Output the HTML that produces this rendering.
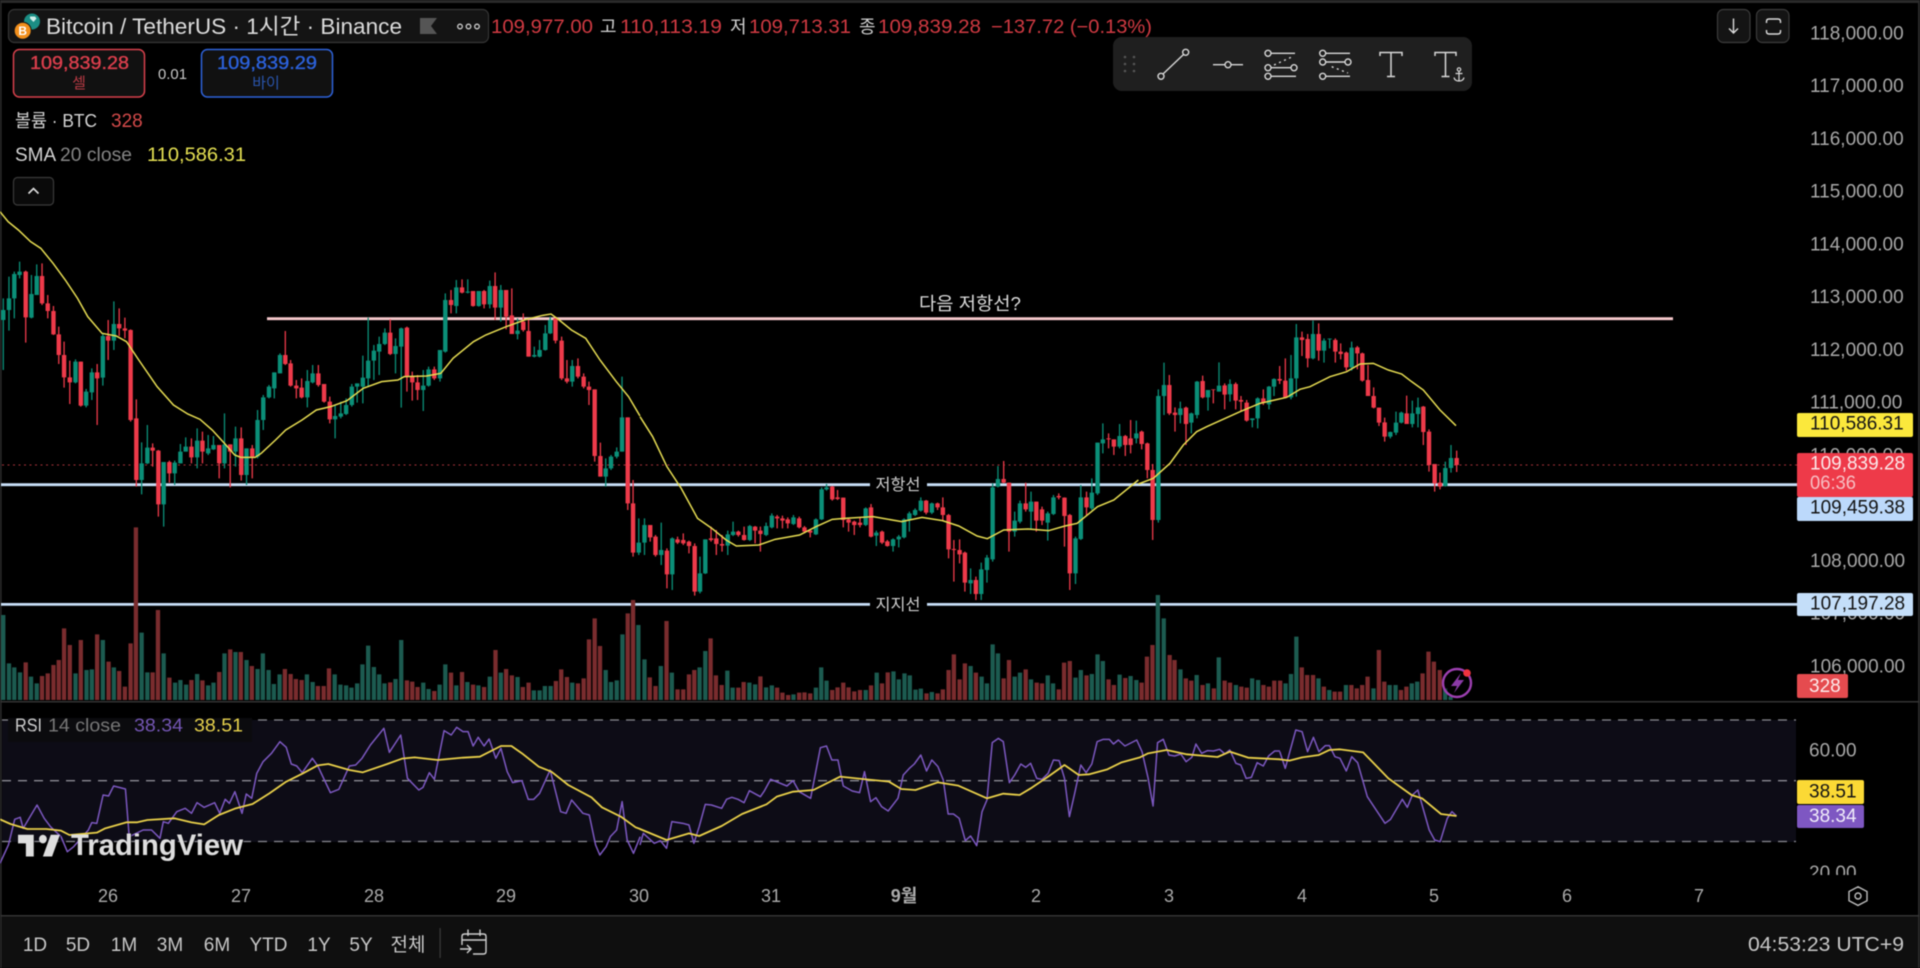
<!DOCTYPE html>
<html lang="ko"><head><meta charset="utf-8"><title>Bitcoin / TetherUS</title>
<style>
html,body{margin:0;padding:0;background:#000;overflow:hidden;width:1920px;height:968px}
svg{display:block;position:absolute;left:0;top:0;filter:blur(.45px)}
text{font-family:"Liberation Sans","Noto Sans CJK KR",sans-serif;white-space:pre}
.n path,.n polyline{vector-effect:non-scaling-stroke;fill:none}
.wg{stroke:#0b8f78;stroke-width:1.3}.wr{stroke:#ee3a4a;stroke-width:1.3}
.bg{stroke:#0b8f78;stroke-width:4.4}.br{stroke:#ee3a4a;stroke-width:4.4}
.vg{stroke:#1c5b50;stroke-width:4.3}.vr{stroke:#7a2c2e;stroke-width:4.3}
.sma{stroke:#e6dc52;stroke-width:1.5}
.rp{stroke:#7c58c0;stroke-width:1.5;stroke-linejoin:round}.ry{stroke:#e9d04a;stroke-width:1.8;stroke-linejoin:round}
.p{font-size:19px;fill:#a8a8a8}
.d{font-size:18px;fill:#aaa;text-anchor:middle}
.t{font-size:19px;fill:#c8c8c8;text-anchor:middle}
.i{fill:none;stroke:#d8d8d8;stroke-width:1.4}
</style></head><body>
<svg width="1920" height="968" viewBox="0 0 1920 968" xmlns="http://www.w3.org/2000/svg">
<rect width="1920" height="968" fill="#000"/>
<rect x="2" y="720" width="1794" height="122" fill="#0d0c16"/>
<rect y="916" width="1920" height="52" fill="#0f0f0f"/>
<rect y="0" width="1920" height="3" fill="#2a2a2a"/>
<rect x="0" y="0" width="1.6" height="968" fill="#2a2a2a"/>
<rect x="1918" y="0" width="2" height="968" fill="#2a2a2a"/>
<rect y="701" width="1920" height="1.5" fill="#333"/>
<rect y="915" width="1920" height="1.5" fill="#333"/>

<!-- horizontal drawings -->
<path d="M2 465H1797" stroke="#a8323a" stroke-width="1.100" stroke-dasharray="2 3.5" fill="none"/>
<path d="M267 318.7H1673" stroke="#f7c9cd" stroke-width="2.800" fill="none"/>
<path d="M1 484.7H870M927 484.7H1797M1 604.4H870M927 604.4H1797" stroke="#c8dff8" stroke-width="2.800" fill="none"/>

<!-- volume -->
<g class="n" transform="translate(0,520) scale(.40816,.33333)">
<path class="vg" d="M8 285V540M22 430V540M35 442V540M49 457V540M76 470V540M90 490V540M185 460V540M212 450V540M225 448V540M252 360V540M279 442V540M347 338V540M361 457V540M401 400V540M429 488V540M442 480V540M456 494V540M483 462V540M510 496V540M523 488V540M550 400V540M577 396V540M604 420V540M631 447V540M644 400V540M658 450V540M671 492V540M685 463V540M752 463V540M766 486V540M820 463V540M834 494V540M848 496V540M861 503V540M875 490V540M888 433V540M902 377V540M916 441V540M929 463V540M942 490V540M969 477V540M983 360V540M1037 488V540M1050 507V540M1077 494V540M1091 433V540M1118 496V540M1145 486V540M1172 496V540M1200 470V540M1227 458V540M1268 471V540M1308 511V540M1322 511V540M1335 498V540M1349 498V540M1402 488V540M1484 450V540M1497 486V540M1511 481V540M1525 343V540M1564 315V540"/>
<path class="vr" d="M63 427V540M103 468V540M117 460V540M131 435V540M144 420V540M157 325V540M171 375V540M198 360V540M238 343V540M266 425V540M292 453V540M306 500V540M320 370V540M333 22V540M374 457V540M387 270V540M415 473V540M469 480V540M496 481V540M537 456V540M564 388V540M590 396V540M617 438V540M698 447V540M712 462V540M725 477V540M739 480V540M779 498V540M793 498V540M806 445V540M956 487V540M997 481V540M1010 485V540M1023 501V540M1064 513V540M1105 458V540M1132 456V540M1159 494V540M1186 501V540M1214 390V540M1240 447V540M1254 466V540M1281 501V540M1295 488V540M1362 483V540M1375 448V540M1389 471V540M1416 490V540M1430 475V540M1443 358V540M1457 295V540M1470 378V540M1538 280V540M1551 240V540"/>
</g>
<g class="n" transform="translate(620,400) scale(.40816,.33333)">
<path class="vg" d="M60 778V900M100 798V900M127 818V900M195 802V900M209 753V900M263 812V900M276 863V900M317 848V900M331 853V900M358 862V900M372 856V900M425 883V900M480 863V900M493 802V900M506 842V900M602 870V900M629 818V900M670 814V900M683 838V900M697 820V900M710 826V900M724 869V900M737 866V900M764 876V900M859 798V900M886 830V900M899 850V900M913 733V900M926 760V900M967 830V900M980 818V900M1007 838V900M1048 826V900M1061 850V900M1116 833V900M1129 810V900M1156 822V900M1170 763V900M1183 783V900M1224 824V900M1251 828V900M1265 840V900"/>
<path class="vr" d="M73 832V900M87 858V900M114 663V900M141 868V900M155 868V900M169 823V900M182 810V900M222 715V900M235 826V900M249 855V900M290 863V900M303 846V900M344 829V900M385 863V900M398 878V900M412 885V900M439 878V900M452 877V900M466 880V900M520 870V900M533 862V900M547 848V900M560 862V900M574 874V900M588 870V900M615 856V900M642 850V900M656 817V900M751 880V900M778 880V900M791 868V900M805 810V900M818 763V900M832 838V900M845 790V900M872 818V900M940 835V900M953 780V900M994 808V900M1021 848V900M1034 850V900M1075 868V900M1088 788V900M1102 783V900M1143 826V900M1197 838V900M1210 855V900M1238 834V900M1278 848V900M1291 770V900"/>
</g>
<g class="n" transform="translate(1150,300) scale(.49115,.33333)">
<path class="vg" d="M16 885V1200M28 955V1200M62 1108V1200M95 1125V1200M118 1150V1200M140 1072V1200M175 1155V1200M208 1135V1200M220 1140V1200M276 1150V1200M287 1122V1200M298 1010V1200M343 1135V1200M365 1170V1200M399 1155V1200M455 1165V1200M488 1155V1200M500 1155V1200M533 1150V1200M544 1145V1200M601 1165V1200M612 1190V1200"/>
<path class="vr" d="M5 1035V1200M40 1065V1200M50 1080V1200M73 1135V1200M84 1142V1200M107 1155V1200M130 1165V1200M152 1142V1200M163 1148V1200M186 1160V1200M197 1163V1200M231 1155V1200M242 1160V1200M253 1142V1200M265 1142V1200M309 1102V1200M320 1125V1200M332 1125V1200M354 1160V1200M376 1175V1200M387 1175V1200M410 1155V1200M421 1165V1200M432 1155V1200M443 1130V1200M466 1050V1200M477 1145V1200M511 1170V1200M522 1160V1200M555 1120V1200M567 1055V1200M578 1085V1200M590 1110V1200"/>
</g>

<!-- candles left -->
<g class="n" transform="translate(0,210) scale(.40816,.33333)">
<path class="wg" d="M8 265V480M22 200V362M35 185V325M48 155V205M77 195V325M90 163V255M185 448V520M211 537V592M225 475V570M252 372V527M279 274V420M347 697V853M361 645V762M401 756V950M428 752V825M442 702V760M455 682V725M483 655V775M510 675V735M523 678V720M550 610V775M577 650V770M604 715V825M631 600V745M645 555V660M659 525V565M672 487V565M686 430V490M753 480V592M766 465V520M821 585V685M835 575V625M848 565V615M862 522V590M875 520V578M889 437V580M902 323V530M916 405V510M929 380V495M943 355V405M969 385V490M983 353V593M1037 480V603M1050 470V530M1078 420V515M1091 250V428M1118 210V310M1146 208V250M1173 243V290M1200 212V295M1227 225V335M1268 325V388M1309 410V442M1322 390V442M1336 345V422M1348 320V372M1402 450V530M1484 745V830M1497 735V780M1511 712V745M1524 500V725"/>
<path class="bg" d="M8 300V330M22 265V300M35 192V265M48 185V195M77 252V323M90 198V255M185 455V517M211 545V587M225 487V547M252 378V503M279 342V392M347 760V810M361 713V760M401 756V883M428 758V790M442 725V760M455 710V725M483 692V742M510 715V730M523 705V718M550 703V760M577 685V725M604 715V795M631 630V740M645 562V630M659 530V562M672 487V535M686 435V490M753 513V562M766 490V517M821 618V628M835 610V620M848 585V612M862 530V585M875 520V530M889 503V530M902 452V505M916 422V452M929 402V425M943 368V402M969 408V432M983 355V410M1037 527V540M1050 478V527M1078 420V505M1091 270V425M1118 232V288M1146 245V248M1173 243V288M1200 228V283M1227 240V293M1268 362V372M1309 435V440M1322 420V440M1336 370V420M1348 330V370M1402 468V515M1484 775V800M1497 740V775M1511 725V740M1524 622V725"/>
<path class="wr" d="M63 182V398M103 160V285M117 255V325M131 288V375M144 350V462M157 395V533M171 452V582M198 455V590M238 462V645M265 330V450M292 295V378M306 323V385M320 358V635M334 568V830M374 700V770M388 720V920M415 752V818M469 685V760M496 665V760M537 705V805M564 703V832M591 652V812M618 705V805M699 363V465M712 450V530M726 510V565M739 505V565M780 465V530M794 522V578M808 560V640M956 328V435M997 350V545M1010 485V572M1023 495V570M1064 470V510M1105 240V310M1132 208V250M1159 243V290M1186 240V295M1213 187V330M1240 240V358M1254 235V372M1282 310V365M1295 330V440M1361 320V400M1376 380V510M1389 450V520M1416 445V505M1430 490V535M1443 515V585M1457 538V755M1471 698V800M1538 622V900"/>
<path class="br" d="M63 185V322M103 198V280M117 280V303M131 303V373M144 373V435M157 435V502M171 502V517M198 455V587M238 487V505M265 378V392M292 342V355M306 355V362M320 360V630M334 625V810M374 713V722M388 722V883M415 756V790M469 710V742M496 692V725M537 705V760M564 703V725M591 685V795M618 715V740M699 435V462M712 460V527M726 527V535M739 533V562M780 490V525M794 522V575M808 575V628M956 368V432M997 353V500M1010 500V517M1023 517V540M1064 478V505M1105 270V285M1132 232V248M1159 243V288M1186 243V283M1213 228V293M1240 240V320M1254 316V372M1282 335V360M1295 363V440M1361 325V392M1376 392V505M1389 505V515M1416 468V500M1430 500V530M1443 530V540M1457 538V738M1471 738V800M1538 622V880"/>
</g>
<!-- candles middle -->
<g class="n" transform="translate(620,400) scale(.40816,.33333)">
<path class="wg" d="M46 355V465M60 355V465M101 368V495M128 412V570M196 470V580M209 418V522M264 392V465M277 365V408M318 375V423M358 368V408M372 340V385M425 345V375M480 355V405M494 262V360M506 252V272M602 322V378M628 392V438M669 415V455M683 405V442M696 355V415M709 335V395M723 325V348M737 292V335M764 308V342M859 505V582M885 488V600M899 465V548M913 250V485M926 198V262M967 335V410M980 302V370M1007 275V390M1048 335V422M1062 285V345M1116 410V552M1129 255V420M1156 235V330M1170 128V285M1183 70V160M1224 72V145M1265 62V130"/>
<path class="bg" d="M46 428V458M60 375V428M101 450V465M128 415V523M196 520V575M209 418V520M264 403V437M277 395V405M318 378V420M358 378V405M372 347V382M425 352V372M480 358V403M494 268V358M506 262V268M602 325V375M628 398V407M669 418V438M683 410V418M696 358V412M709 340V360M723 330V345M737 302V332M764 310V338M859 540V550M885 508V582M899 473V510M913 262V478M926 237V260M967 362V395M980 310V365M1007 305V335M1048 340V368M1062 292V342M1116 415V520M1129 292V417M1156 278V325M1170 128V280M1183 118V130M1224 108V140M1265 100V115"/>
<path class="wr" d="M32 240V470M74 375V425M87 405V470M115 445V565M141 410V432M155 400V435M169 422V460M183 430V587M223 380V425M236 390V465M250 405V455M290 392V410M304 380V422M331 378V430M344 380V455M385 345V385M398 347V385M411 352V385M439 350V385M452 378V400M466 388V412M520 258V302M533 270V300M547 293V382M560 355V395M574 362V405M588 352V382M615 312V412M642 392V432M655 420V440M750 300V343M778 308V330M791 292V362M805 342V475M818 420V545M832 418V490M845 455V575M872 530V600M940 183V250M953 248V455M994 248V335M1020 305V395M1034 320V375M1075 280V298M1089 292V440M1102 342V570M1143 275V345M1197 100V145M1210 118V165M1238 105V168M1251 60V160"/>
<path class="br" d="M32 310V458M74 375V412M87 410V465M115 452V523M141 418V428M155 420V430M169 425V438M183 438V575M223 415V420M236 415V432M250 432V437M290 395V405M304 405V420M331 380V392M344 392V402M385 350V355M398 355V362M411 358V370M439 355V382M452 382V395M466 392V398M520 260V298M533 292V297M547 293V360M560 358V368M574 365V375M588 368V375M615 322V410M642 395V428M655 424V438M750 302V338M778 310V322M791 322V345M805 345V448M818 447V450M832 450V463M845 458V548M872 540V582M940 237V248M953 248V395M994 310V328M1020 305V362M1034 328V362M1075 288V292M1089 293V348M1102 345V520M1143 292V322M1197 115V118M1210 118V140M1238 108V135M1251 115V135"/>
</g>
<!-- candles right -->
<g class="n" transform="translate(1140,310) scale(.33333,.33333)">
<path class="wg" d="M55 238V638M72 158V315M121 275V340M154 308V370M171 213V325M204 240V302M237 157V245M270 208V275M337 325V352M353 262V355M387 228V298M402 205V258M453 135V268M469 42V260M519 32V148M552 85V158M569 85V115M635 95V182M751 365V385M768 305V375M784 305V340M817 272V352M834 263V352M916 455V530M933 405V488"/>
<path class="bg" d="M55 258V630M72 225V258M121 295V315M154 310V338M171 215V315M204 240V262M237 227V245M270 222V253M337 325V330M353 265V325M387 230V283M402 207V230M453 205V262M469 82V205M519 72V145M552 92V122M569 86V88M635 113V172M751 366V380M768 338V368M784 308V338M817 310V342M834 292V312M916 474V528M933 444V474"/>
<path class="wr" d="M5 362V418M22 398V505M38 462V690M88 195V315M105 292V365M138 290V405M188 197V265M220 238V280M254 220V298M287 217V298M303 258V305M320 270V335M370 238V285M419 168V222M436 145V265M486 65V138M503 72V172M536 40V152M586 85V158M602 100V148M619 125V182M652 108V178M667 128V215M684 165V258M701 232V295M717 293V348M734 323V395M800 257V342M850 288V405M867 358V485M884 462V545M900 488V538M950 422V486"/>
<path class="br" d="M5 365V402M22 400V480M38 480V630M88 225V310M105 308V315M138 293V342M188 213V262M220 238V240M254 226V254M287 222V272M303 270V275M320 278V332M370 265V278M419 207V212M436 212V262M486 82V90M503 87V145M536 72V122M586 90V125M602 125V132M619 128V172M652 112V130M667 130V212M684 210V258M701 258V293M717 293V338M734 337V380M800 310V342M850 290V366M867 365V465M884 462V520M900 518V530M950 444V465"/>
</g>

<!-- SMA -->
<g class="n">
<polyline class="sma" transform="translate(0,210) scale(.40816,.33333)" points="0,5 20,35 45,60 75,95 100,115 130,160 160,210 190,265 215,320 250,370 285,378 310,395 340,450 385,530 425,585 460,612 490,628 520,660 550,700 575,735 590,742 625,742 640,730 675,690 700,660 740,630 775,600 810,590 850,572 890,535 935,515 975,510 990,500 1045,498 1080,490 1110,445 1160,395 1190,375 1240,350 1290,328 1330,316 1350,312 1370,330 1400,360 1435,385 1470,450 1510,515 1540,560 1568,618"/>
<polyline class="sma" transform="translate(620,400) scale(.40816,.33333)" points="49,50 80,110 115,200 150,265 190,355 225,385 260,420 285,438 340,435 380,418 440,405 480,380 520,358 550,355 620,350 690,365 740,352 790,362 830,378 875,408 900,416 940,390 1000,387 1050,392 1090,378 1120,370 1170,320 1210,300 1270,240"/>
<polyline class="sma" transform="translate(1140,310) scale(.33333,.33333)" points="-5,522 40,505 90,460 130,405 170,365 200,350 300,305 360,280 440,262 480,238 510,230 570,200 620,185 660,162 700,160 745,180 785,192 815,215 850,240 900,300 948,347"/>
</g>

<!-- RSI -->
<path d="M2 720H1796M2 780.7H1796M2 841.5H1796" stroke="#8a8a92" stroke-width="1.300" stroke-dasharray="9 7" fill="none"/>
<g class="n">
<g transform="translate(0,690) scale(.42092,.33333)">
<polyline class="rp" points="0,520 20,465 35,388 48,382 55,415 88,345 105,385 120,410 145,440 160,485 175,470 210,420 218,398 230,400 245,315 258,318 270,288 298,297 307,440 340,420 360,420 380,445 388,395 400,400 420,365 440,355 455,370 468,338 485,352 510,338 522,370 535,328 545,340 558,305 575,370 585,312 598,325 610,250 625,215 645,190 665,155 680,172 692,222 705,228 718,248 742,205 755,228 785,308 805,298 830,228 845,225 860,205 880,165 912,115 925,187 952,135 968,265 995,300 1005,292 1020,248 1032,268 1055,122 1072,135 1085,112 1100,125 1112,125 1124,168 1136,142 1150,168 1162,147 1178,205 1190,175 1205,245 1218,278 1240,272 1255,328 1268,328 1282,310 1307,240 1332,365 1345,370 1358,330 1385,370 1400,375 1415,465 1425,495 1440,470 1450,440 1465,420 1478,335 1490,450 1505,490 1521,440"/>
<polyline class="ry" points="0,388 25,402 65,417 110,417 145,422 165,435 230,428 250,415 300,397 325,397 350,390 415,385 455,397 485,403 520,375 560,355 600,342 640,310 680,275 720,250 755,226 780,222 830,240 862,247 920,222 955,206 985,202 1040,210 1100,203 1140,200 1190,168 1215,168 1240,190 1280,230 1310,245 1350,285 1405,322 1430,352 1475,380 1510,412 1521,417"/>
</g>
<g transform="translate(640,690) scale(.40816,.33333)">
<polyline class="rp" points="0,465 8,430 35,460 50,452 65,475 78,395 105,400 120,405 132,460 145,410 160,343 175,345 200,355 212,328 225,322 240,328 255,338 268,302 295,320 305,302 320,268 360,288 375,272 390,305 418,325 442,173 457,168 470,210 485,210 498,288 520,303 538,308 550,245 565,335 578,323 592,350 608,363 632,325 645,255 660,235 672,222 688,195 702,243 715,210 730,230 743,270 755,372 768,372 782,385 797,452 810,438 825,467 838,365 850,330 863,158 878,145 890,155 905,278 918,255 933,222 945,232 957,220 972,265 985,268 1000,250 1013,210 1027,212 1040,265 1052,380 1065,310 1080,225 1093,248 1107,222 1120,155 1135,148 1150,148 1160,162 1172,150 1188,168 1217,150 1230,185 1245,265 1257,348 1268,158 1282,148 1296,195 1310,198 1325,192 1338,215 1352,202 1362,162 1376,190 1390,182 1405,183 1420,178 1433,192 1445,180 1460,220 1472,225 1485,265 1498,262 1512,218 1527,228 1540,198 1555,183 1568,183"/>
<polyline class="ry" points="0,417 65,450 120,430 145,438 200,408 250,372 310,343 335,320 375,305 425,300 490,260 545,267 610,275 640,297 675,300 730,277 780,287 850,325 890,311 930,315 960,293 1000,260 1040,225 1075,255 1100,253 1145,238 1180,217 1225,202 1245,190 1290,180 1340,193 1415,201 1445,185 1490,203 1568,208"/>
</g>
<g transform="translate(1260,690) scale(.42092,.33333)">
<polyline class="rp" points="47,185 60,235 85,120 100,125 113,185 127,142 140,185 155,167 165,167 178,200 190,205 205,243 218,200 232,218 255,320 297,400 310,388 338,328 350,352 362,315 375,300 402,420 415,450 428,455 445,385 456,365 467,378"/>
<polyline class="ry" points="47,208 70,212 100,202 140,195 165,180 190,178 245,187 305,265 360,315 385,325 430,372 467,378"/>
</g>
</g>

<!-- TradingView watermark -->
<g>
<g transform="translate(15.4,826) scale(1.31,1.45)" fill="#000" opacity=".55"><path d="M14.8 6.6H2.8v6h6v9h6V6.6zm14 15h-7l6-15h7l-6 15zm-7-9a3 3 0 1 0 0-6 3 3 0 0 0 0 6z"/></g>
<g transform="translate(15.4,826) scale(1.31,1.45)" fill="#dedede"><path d="M14 6H2v6h6v9h6V6zm14 15h-7l6-15h7l-6 15zm-7-9a3 3 0 1 0 0-6 3 3 0 0 0 0 6z"/></g>
<text x="72" y="856" font-size="30" font-weight="700" fill="#000" opacity=".55" textLength="172" lengthAdjust="spacingAndGlyphs">TradingView</text>
<text x="71" y="855" font-size="30" font-weight="700" fill="#dedede" textLength="172" lengthAdjust="spacingAndGlyphs">TradingView</text>
</g>

<!-- drawing labels -->
<text x="970" y="310" font-size="18" fill="#dcdcdc" text-anchor="middle" textLength="102" lengthAdjust="spacingAndGlyphs">다음 저항선?</text>
<text x="898" y="490" font-size="16" fill="#cfcfcf" text-anchor="middle" textLength="45" lengthAdjust="spacingAndGlyphs">저항선</text>
<text x="898" y="610" font-size="16" fill="#cfcfcf" text-anchor="middle" textLength="45" lengthAdjust="spacingAndGlyphs">지지선</text>

<!-- bolt -->
<circle cx="1457" cy="683" r="14" fill="#000" fill-opacity=".25" stroke="#9c3fb0" stroke-width="2.4"/>
<path d="M1461 673L1451 686H1457L1454 693L1464 680H1458Z" fill="#8a3aa6"/>
<circle cx="1467" cy="673" r="3.8" fill="#f0333f"/>

<!-- price axis -->
<g class="p">
<text x="1810" y="39.5">118,000.00</text>
<text x="1810" y="92.2">117,000.00</text>
<text x="1810" y="145">116,000.00</text>
<text x="1810" y="197.7">115,000.00</text>
<text x="1810" y="250.5">114,000.00</text>
<text x="1810" y="303.2">113,000.00</text>
<text x="1810" y="356">112,000.00</text>
<text x="1810" y="408.7">111,000.00</text>
<text x="1810" y="461.4">110,000.00</text>
<text x="1810" y="566.9">108,000.00</text>
<text x="1810" y="619.7">107,000.00</text>
<text x="1810" y="672.6">106,000.00</text>
<text x="1809" y="756.5">60.00</text>
</g>
<rect x="1797" y="413" width="116" height="24" rx="2" fill="#fbe83c"/>
<text x="1810" y="429.5" font-size="19" fill="#141414">110,586.31</text>
<rect x="1797" y="453" width="116" height="44" rx="2" fill="#ee3a49"/>
<text x="1810" y="469.5" font-size="19" fill="#fbe9ea">109,839.28</text>
<text x="1810" y="489" font-size="19" fill="#f7bfc4" textLength="46" lengthAdjust="spacingAndGlyphs">06:36</text>
<rect x="1797" y="497" width="116" height="24" rx="2" fill="#bcd9fb"/>
<text x="1810" y="513.5" font-size="19" fill="#141414">109,459.38</text>
<rect x="1797" y="593" width="116" height="23" rx="2" fill="#c4def9"/>
<text x="1810" y="609.5" font-size="19" fill="#141414">107,197.28</text>
<rect x="1797" y="674" width="51" height="24" rx="2" fill="#e54b4f"/>
<text x="1809" y="692" font-size="19" fill="#fdeaea">328</text>
<rect x="1797" y="780" width="67" height="24" rx="2" fill="#fbd935"/>
<text x="1809" y="797.7" font-size="19" fill="#141414">38.51</text>
<rect x="1797" y="805" width="67" height="23" rx="2" fill="#7e57c2"/>
<text x="1809" y="822" font-size="19" fill="#f0ecfa">38.34</text>
<clipPath id="c20"><rect x="1800" y="860" width="70" height="15"/></clipPath>
<text x="1809" y="879" font-size="19" fill="#a8a8a8" clip-path="url(#c20)">20.00</text>

<!-- header -->
<rect x="8.5" y="9.5" width="480" height="33" rx="6" fill="#141414" stroke="#363636" stroke-width="1.2"/>
<circle cx="32" cy="21.5" r="8" fill="#1b8d84"/>
<path d="M30 16.5h5l1.5 2-3 3.5-3.500-3.500z" fill="#cfeeea"/>
<circle cx="22.700" cy="30.700" r="8.500" fill="#f28f1b" stroke="#141414" stroke-width="1"/>
<text x="22.700" y="35" font-size="12" font-weight="700" fill="#fff" text-anchor="middle">B</text>
<text x="46" y="34" font-size="22" fill="#dcdcdc" textLength="356" lengthAdjust="spacingAndGlyphs">Bitcoin / TetherUS · 1시간 · Binance</text>
<path d="M420 18H437L431 26L437 34H420Z" fill="#555"/>
<g fill="none" stroke="#cfcfcf" stroke-width="1.300"><circle cx="460" cy="26.500" r="2.300"/><circle cx="468.500" cy="26.500" r="2.300"/><circle cx="477" cy="26.500" r="2.300"/></g>

<g font-size="19" fill="#d13a42">
<text x="491" y="33" textLength="102" lengthAdjust="spacingAndGlyphs">109,977.00</text>
<text x="600" y="33" fill="#d0d0d0" font-size="18">고</text>
<text x="620" y="33" textLength="102" lengthAdjust="spacingAndGlyphs">110,113.19</text>
<text x="730" y="33" fill="#d0d0d0" font-size="18">저</text>
<text x="749" y="33" textLength="102" lengthAdjust="spacingAndGlyphs">109,713.31</text>
<text x="859" y="33" fill="#d0d0d0" font-size="18">종</text>
<text x="878" y="33" textLength="103" lengthAdjust="spacingAndGlyphs">109,839.28</text>
<text x="991" y="33" textLength="161" lengthAdjust="spacingAndGlyphs">−137.72 (−0.13%)</text>
</g>

<rect x="13.500" y="49.500" width="131" height="47.500" rx="6" fill="#111" stroke="#d8414c" stroke-width="1.500"/>
<text x="30" y="69" font-size="18" fill="#dd3f4d" stroke="#dd3f4d" stroke-width=".35" textLength="99" lengthAdjust="spacingAndGlyphs">109,839.28</text>
<text x="79" y="88" font-size="15" fill="#b83a44" text-anchor="middle">셀</text>
<text x="158" y="79" font-size="15" fill="#c8c8c8" textLength="29" lengthAdjust="spacingAndGlyphs">0.01</text>
<rect x="201.500" y="49.500" width="131" height="47.500" rx="6" fill="#111" stroke="#2e62d9" stroke-width="1.500"/>
<text x="217" y="69" font-size="18" fill="#2c62dc" stroke="#2c62dc" stroke-width=".35" textLength="100" lengthAdjust="spacingAndGlyphs">109,839.29</text>
<text x="266" y="88" font-size="15" fill="#2a55ad" text-anchor="middle">바이</text>

<text x="15" y="127" font-size="18" fill="#d4d4d4" textLength="82" lengthAdjust="spacingAndGlyphs">볼륨 · BTC</text>
<text x="111" y="127" font-size="19" fill="#d44a4a">328</text>
<text x="15" y="161" font-size="19" fill="#d4d4d4">SMA</text>
<text x="60" y="161" font-size="19" fill="#858585" textLength="72" lengthAdjust="spacingAndGlyphs">20 close</text>
<text x="147" y="161" font-size="19" fill="#e5e052" textLength="99" lengthAdjust="spacingAndGlyphs">110,586.31</text>
<rect x="13.500" y="177.500" width="40" height="27.500" rx="4" fill="#0a0a0a" stroke="#3a3a3a" stroke-width="1.200"/>
<path d="M28.500 193.500l5-5 5 5" fill="none" stroke="#e0e0e0" stroke-width="1.600"/>

<!-- drawing toolbar -->
<rect x="1113" y="37" width="359" height="54" rx="9" fill="#1f1f1f"/>
<g fill="#555"><circle cx="1125" cy="57" r="1.300"/><circle cx="1134" cy="57" r="1.300"/><circle cx="1125" cy="64" r="1.300"/><circle cx="1134" cy="64" r="1.300"/><circle cx="1125" cy="71" r="1.300"/><circle cx="1134" cy="71" r="1.300"/></g>
<g class="i">
<path d="M1163 74L1183.500 54.500"/><circle cx="1161" cy="76.300" r="3"/><circle cx="1185.700" cy="52.300" r="3"/>
<path d="M1213 64.700H1225M1231 64.700H1243"/><circle cx="1228" cy="64.700" r="3"/>
<path d="M1271 53.300H1295M1271 67.700H1291M1271 76.300H1296"/><circle cx="1268" cy="53.300" r="3"/><circle cx="1268" cy="67.700" r="3"/><circle cx="1294" cy="67.700" r="3"/><circle cx="1268" cy="76.300" r="3"/>
<path d="M1274 65L1294 56" stroke-dasharray="2 3.500"/>
<path d="M1326 53.300H1350M1326 62H1345M1326 76.300H1350"/><circle cx="1322.700" cy="53.300" r="3"/><circle cx="1322.700" cy="62" r="3"/><circle cx="1348" cy="62" r="3"/><circle cx="1322.700" cy="76.300" r="3"/>
<path d="M1331.700 66.700L1348 73" stroke-dasharray="2 3.500"/>
<path d="M1380 56V52.500H1402V56M1391 52.500V76.500M1387 76.500H1395" stroke-width="1.500"/>
<path d="M1435 56V52.500H1456V56M1445.500 52.500V76.500M1441.500 76.500H1449.500" stroke-width="1.500"/>
<circle cx="1459" cy="69.500" r="1.700" stroke-width="1.200"/><path d="M1459 71.200V81M1455.500 73.500H1462.500M1454 77.500C1454.500 80 1456.500 81 1459 81C1461.500 81 1463.500 80 1464 77.500" stroke-width="1.200"/>
</g>

<!-- top right buttons -->
<rect x="1717.500" y="9.500" width="32.500" height="33" rx="6" fill="#141414" stroke="#3c3c3c" stroke-width="1.200"/>
<path d="M1733.500 18.500V33M1729 28.500L1733.500 33L1738 28.500" fill="none" stroke="#dcdcdc" stroke-width="1.400"/>
<rect x="1756.500" y="9.500" width="32.500" height="33" rx="6" fill="#141414" stroke="#3c3c3c" stroke-width="1.200"/>
<path d="M1766.500 23V21.500Q1766.500 19 1769 19H1778Q1780.500 19 1780.500 21.500V23M1766.500 30V31.500Q1766.500 34 1769 34H1778Q1780.500 34 1780.500 31.500V30" fill="none" stroke="#dcdcdc" stroke-width="1.400"/>

<!-- RSI legend -->
<rect x="8" y="718" width="244" height="24" fill="#0b0b0e"/>
<text x="15" y="731.700" font-size="18" fill="#cfcfcf" textLength="27" lengthAdjust="spacingAndGlyphs">RSI</text>
<text x="48" y="731.700" font-size="18" fill="#777" textLength="73" lengthAdjust="spacingAndGlyphs">14 close</text>
<text x="134" y="731.700" font-size="18" fill="#7456b4" textLength="49" lengthAdjust="spacingAndGlyphs">38.34</text>
<text x="194" y="731.700" font-size="18" fill="#e7d24c" textLength="49" lengthAdjust="spacingAndGlyphs">38.51</text>

<!-- time axis -->
<g class="d">
<text x="108" y="902">26</text><text x="241" y="902">27</text><text x="374" y="902">28</text><text x="506" y="902">29</text><text x="639" y="902">30</text><text x="771" y="902">31</text>
<text x="904" y="902" font-weight="700">9월</text>
<text x="1036" y="902">2</text><text x="1169" y="902">3</text><text x="1302" y="902">4</text><text x="1434" y="902">5</text><text x="1567" y="902">6</text><text x="1699" y="902">7</text>
</g>
<path d="M1858 886.800L1867 891.500V900.700L1858 905.400L1849 900.700V891.500Z" fill="none" stroke="#bdbdbd" stroke-width="1.400"/>
<circle cx="1858" cy="896" r="3" fill="none" stroke="#bdbdbd" stroke-width="1.400"/>

<!-- bottom bar -->
<g class="t">
<text x="35" y="951">1D</text><text x="78" y="951">5D</text><text x="124" y="951">1M</text><text x="170" y="951">3M</text><text x="217" y="951">6M</text><text x="268.500" y="951">YTD</text><text x="319" y="951">1Y</text><text x="361" y="951">5Y</text><text x="408" y="951" font-size="19">전체</text>
</g>
<rect x="439.500" y="928" width="1.200" height="30" fill="#3a3a3a"/>
<path d="M462 945V936.500Q462 934 464.500 934H483.500Q486 934 486 936.500V951.500Q486 954 483.500 954H473M462 940H486M468 929.500V936M480 929.500V936M460 949H471M467 945L471 949L467 953" fill="none" stroke="#cfcfcf" stroke-width="1.400"/>
<text x="1748" y="951" font-size="20" fill="#c8c8c8" textLength="156" lengthAdjust="spacingAndGlyphs">04:53:23 UTC+9</text>
</svg>
</body></html>
